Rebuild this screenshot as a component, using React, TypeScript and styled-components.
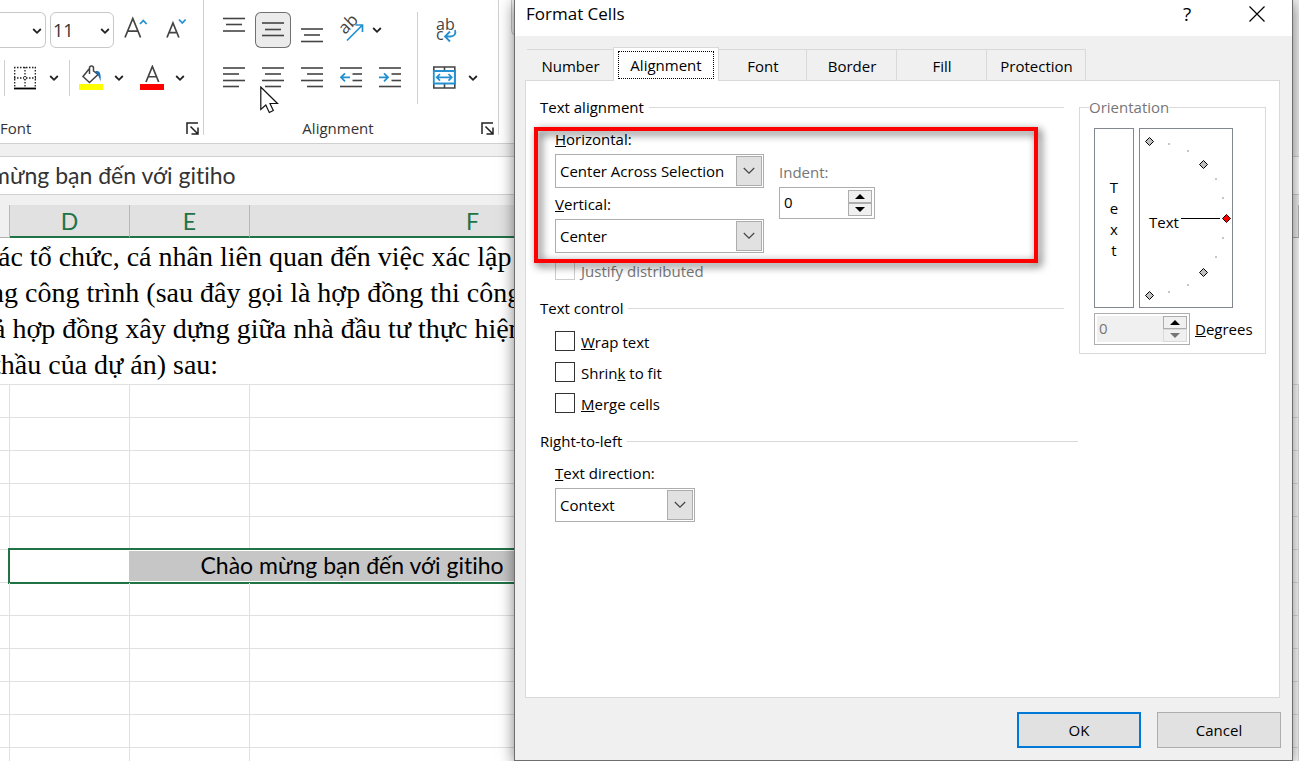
import React from "react";
import styled, { createGlobalStyle, css } from "styled-components";

const UI = `"Open Sans", "Noto Sans", sans-serif`;
const CELL = `Lato, "Noto Sans", sans-serif`;
const GREEN = "#217346";
const BLUE = "#2490d0";
const INK = "#444";

const GlobalStyle = createGlobalStyle`
  *, *::before, *::after { box-sizing: border-box; }
  body { margin: 0; font-family: ${UI}; font-size: 15px; line-height: 20px; color: #000; background: #fff; font-variant-ligatures: none; }
  button, input, select { font: inherit; color: inherit; margin: 0; padding: 0; }
  svg { display: block; flex-shrink: 0; }
`;

const Desktop = styled.div`
  position: relative;
  height: 100vh;
  overflow: hidden;
`;

/* ---------- Workbook ---------- */

const Workbook = styled.main`
  display: flex;
  flex-direction: column;
  background: #f0f0f0;
`;

const Ribbon = styled.header`
  display: flex;
  height: 144px;
  margin-right: 12px;
  background: #fff;
  border-bottom: 1px solid #d0d0d0;
`;

const Group = styled.section`
  display: flex;
  flex-direction: column;
  padding: 12px 4px 0 0;
  margin-bottom: 8px;
  border-right: 1px solid #d0d0d0;
`;

const GroupBody = styled.div`
  display: flex;
`;

const Tools = styled.div`
  display: flex;
  flex-direction: column;
  gap: 12px;
`;

const ToolRow = styled.div<{ $gap?: number; $indent?: number }>`
  display: flex;
  align-items: center;
  height: 36px;
  gap: ${(p) => p.$gap ?? 0}px;
  padding-left: ${(p) => p.$indent ?? 0}px;
`;

const GroupFooter = styled.footer<{ $center?: boolean }>`
  display: grid;
  grid-template-columns: 1fr 22px;
  align-items: center;
  justify-items: ${(p) => (p.$center ? "center" : "start")};
  height: 24px;
  margin-top: 22px;
  color: #333;
  svg {
    justify-self: end;
  }
`;

const IconButton = styled.button<{ $w?: number; $active?: boolean }>`
  flex: none;
  display: flex;
  align-items: center;
  justify-content: center;
  width: ${(p) => p.$w ?? 36}px;
  height: 36px;
  border: 0;
  border-radius: 6px;
  background: transparent;
  ${(p) =>
    p.$active &&
    css`
      background: #ebebeb;
      box-shadow: inset 0 0 0 1px #707070;
    `}
`;

const Separator = styled.span`
  flex: none;
  width: 1px;
  height: 36px;
  background: #d0d0d0;
`;

const TallSeparator = styled.span`
  flex: none;
  width: 1px;
  height: 92px;
  margin: 0 0 -8px 9px;
  background: #d0d0d0;
`;

const RibbonPicker = styled.span<{ $w: number; $cut?: boolean }>`
  position: relative;
  width: ${(p) => p.$w}px;
  height: 36px;
  margin-right: 4px;
  border: 1px solid #c8c8c8;
  border-radius: 6px;
  ${(p) =>
    p.$cut &&
    css`
      border-left: 0;
      border-radius: 0 6px 6px 0;
    `}
  select {
    width: 100%;
    height: 100%;
    padding-left: 2px;
    border: 0;
    background: transparent;
    appearance: none;
    font-size: 18px;
    color: #333;
  }
  svg {
    position: absolute;
    right: 2px;
    top: 12px;
    pointer-events: none;
  }
`;

const GalleryEdge = styled.div`
  width: 120px;
  height: 36px;
  margin-left: 12px;
  border: 1px solid #c8c8c8;
  border-top: 0;
  border-radius: 0 0 6px 6px;
  background: #f4f4f4;
`;

const FormulaBar = styled.div`
  height: 39px;
  margin-top: 12px;
  border: solid #d0d0d0;
  border-width: 1px 0;
  background: #fff;
  overflow: hidden;
  input {
    width: 100%;
    height: 36px;
    border: 0;
    background: none;
    text-indent: -9px;
    font-family: ${CELL};
    font-size: 23px;
    color: #333;
  }
`;

const Sheet = styled.table`
  width: 100%;
  margin-top: 10px;
  table-layout: fixed;
  border-spacing: 0;
  background: #fff;
  font-family: ${CELL};
  font-size: 23px;
`;

const ColumnHead = styled.th<{ $selected?: boolean }>`
  height: 33px;
  padding: 0;
  font-weight: 400;
  color: ${GREEN};
  background: ${(p) => (p.$selected ? "#e1e1e1" : "#f0f0f0")};
  border-right: 1px solid #b8b8b8;
  border-bottom: ${(p) => (p.$selected ? `2px solid ${GREEN}` : "1px solid #b0b0b0")};
`;

const Cell = styled.td`
  position: relative;
  height: 33px;
  padding: 0;
  border: solid #e0e0e0;
  border-width: 0 1px 1px 0;
`;

const WrappedCell = styled.td`
  height: 147px;
  padding: 1px 0;
  border-bottom: 1px solid #e0e0e0;
  overflow: hidden;
  white-space: nowrap;
  font-family: "Liberation Serif", serif;
  font-size: 28px;
  line-height: 36px;
`;

const Line = styled.div<{ $start: number }>`
  text-indent: ${(p) => p.$start}px;
`;

const SelectedRange = styled.div`
  position: absolute;
  inset: -2px -1px -2px -2px;
  padding: 1px;
  border: 2px solid ${GREEN};
  background: linear-gradient(to right, #fff 118px, #c6c6c6 118px) content-box, #fff;
  text-align: center;
  line-height: 28px;
`;

const Pointer = styled.svg`
  position: absolute;
  left: 260px;
  top: 86px;
`;

/* ---------- Dialog ---------- */

const Dialog = styled.div`
  position: absolute;
  inset: 0 6px 0 514px;
  display: flex;
  flex-direction: column;
  border: solid #6e6e6e;
  border-width: 0 1px 1px;
  background: #f0f0f0;
  box-shadow: 0 3px 14px rgba(0, 0, 0, 0.5);
`;

const TitleBar = styled.header`
  display: flex;
  align-items: center;
  height: 36px;
  padding: 0 27px 8px 11px;
  background: #fff;
  h1 {
    flex: 1;
    margin: 0;
    font-size: 17px;
    font-weight: 400;
  }
`;

const CaptionButton = styled.button`
  width: 16px;
  height: 20px;
  margin-left: 54px;
  border: 0;
  background: none;
  font-size: 19px;
`;

const TabList = styled.div`
  display: flex;
  align-items: flex-end;
  height: 44px;
  padding-left: 12px;
`;

const Tab = styled.button<{ $w: number }>`
  width: ${(p) => p.$w}px;
  height: 31px;
  padding: 1px 0 0 1px;
  border: solid #d9d9d9;
  border-width: 1px 1px 0 0;
  background: transparent;
  &[aria-selected="true"] {
    position: relative;
    height: 34px;
    margin: 0 0 -1px -1px;
    padding: 0 4px;
    border-left-width: 1px;
    background: #fff;
  }
`;

const FocusRing = styled.span`
  display: block;
  height: 28px;
  border: 1px dotted #000;
  line-height: 27px;
`;

const Pane = styled.div`
  flex: 1;
  display: grid;
  grid-template-columns: 1fr 187px;
  align-items: start;
  gap: 15px;
  margin: 0 12px 0 10px;
  padding: 16px 13px 0 14px;
  border: 1px solid #d9d9d9;
  background: #fff;
`;

const Settings = styled.div`
  display: flex;
  flex-direction: column;
  gap: 18px;
`;

const Section = styled.section<{ $wide?: boolean }>`
  position: relative;
  margin-right: ${(p) => (p.$wide ? -14 : 0)}px;
`;

const SectionTitle = styled.h2`
  display: flex;
  align-items: center;
  gap: 5px;
  margin: 0 0 12px;
  font-size: 15px;
  font-weight: 400;
  &::after {
    content: "";
    flex: 1;
    height: 1px;
    background: #d9d9d9;
  }
`;

const Fields = styled.div`
  display: flex;
  flex-direction: column;
  align-items: flex-start;
  padding-left: 15px;
`;

const FieldColumns = styled.div`
  display: flex;
  gap: 15px;
`;

const FieldStack = styled.div<{ $top?: number }>`
  display: flex;
  flex-direction: column;
  gap: 6px;
  padding-top: ${(p) => p.$top ?? 0}px;
`;

const Field = styled.div<{ $disabled?: boolean }>`
  display: flex;
  flex-direction: column;
  gap: 5px;
  > label {
    color: ${(p) => (p.$disabled ? "#767676" : "#000")};
  }
`;

const Combo = styled.span<{ $w: number }>`
  position: relative;
  width: ${(p) => p.$w}px;
  height: 34px;
  border: 1px solid #adadad;
  background: #fff;
  select {
    width: 100%;
    height: 100%;
    padding-left: 4px;
    border: 0;
    background: transparent;
    appearance: none;
  }
`;

const ComboArrow = styled.span`
  position: absolute;
  top: 1px;
  right: 1px;
  bottom: 1px;
  display: grid;
  place-items: center;
  width: 26px;
  border: 1px solid #adadad;
  background: #e1e1e1;
  pointer-events: none;
`;

const SpinBox = styled.span<{ $disabled?: boolean }>`
  display: flex;
  width: 96px;
  height: 32px;
  padding: 2px;
  border: 1px solid #adadad;
  background: #fff;
  input {
    flex: 1;
    min-width: 0;
    padding: 0 0 3px 2px;
    border: 0;
    background: ${(p) => (p.$disabled ? "#f0f0f0" : "#fff")};
    color: ${(p) => (p.$disabled ? "#767676" : "#000")};
  }
`;

const SpinButtons = styled.span`
  display: flex;
  flex-direction: column;
  width: 24px;
  button {
    flex: 1;
    display: grid;
    place-items: center;
    border: 1px solid #adadad;
    background: #f0f0f0;
  }
  button:disabled {
    border-color: #d9d9d9;
  }
`;

const CheckRow = styled.label<{ $disabled?: boolean }>`
  display: flex;
  align-items: center;
  gap: 6px;
  height: 21px;
  color: ${(p) => (p.$disabled ? "#767676" : "#000")};
  & + & {
    margin-top: 10px;
  }
  span {
    padding-top: 2px;
  }
  input {
    width: 20px;
    height: 20px;
    appearance: none;
    background: #fff;
    border: 1px solid ${(p) => (p.$disabled ? "#ccc" : "#333")};
  }
`;

const Spacer = styled.div`
  height: 6px;
`;

const Highlight = styled.div`
  position: absolute;
  top: 30px;
  left: -6px;
  right: 26px;
  height: 136px;
  border: 4px solid #f00;
  filter: drop-shadow(3px 3px 4px rgba(0, 0, 0, 0.7));
  pointer-events: none;
`;

const Orientation = styled.fieldset`
  margin: 0;
  padding: 11px 0 8px 14px;
  border: 1px solid #d9d9d9;
  min-width: 0;
  legend {
    margin-left: -5px;
    padding: 0;
    color: #767676;
  }
`;

const OrientationBoxes = styled.div`
  display: flex;
  gap: 5px;
`;

const StackedText = styled.button`
  width: 40px;
  height: 180px;
  padding: 2px 0 0;
  border: 1px solid #828790;
  background: #fff;
  line-height: 21px;
  span {
    display: block;
  }
`;

const Dial = styled.div`
  width: 94px;
  height: 180px;
  border: 1px solid #828790;
  font-size: 15px;
`;

const DegreesRow = styled.div`
  display: flex;
  align-items: center;
  gap: 5px;
  margin-top: 5px;
`;

const Actions = styled.footer`
  display: flex;
  justify-content: flex-end;
  gap: 16px;
  padding: 14px 11px 12px;
`;

const ActionButton = styled.button<{ $primary?: boolean }>`
  width: 124px;
  height: 36px;
  border: ${(p) => (p.$primary ? "2px solid #0078d7" : "1px solid #adadad")};
  background: #e1e1e1;
`;

/* ---------- Icons ---------- */

const Chevron = () => (
  <svg width="12" height="12" viewBox="0 0 12 12" fill="none" stroke="#222" strokeWidth="1.8">
    <path d="M2.2 4l3.8 3.8L9.8 4" />
  </svg>
);

const ComboChevron = () => (
  <svg width="12" height="8" viewBox="0 0 12 8" fill="none" stroke="#444" strokeWidth="1.2">
    <path d="M.8 1l5.2 5.2L11.200 1" />
  </svg>
);

const Triangle = ({ down, color = "#000" }: { down?: boolean; color?: string }) => (
  <svg width="10" height="5" viewBox="0 0 10 5" fill={color}>
    <path d={down ? "M0 0h10L5 5z" : "M0 5h10L5 0z"} />
  </svg>
);

type Stroke = [number, number, number];

const Lines = ({ strokes, children }: { strokes: Stroke[]; children?: React.ReactNode }) => (
  <svg width="36" height="36" viewBox="0 0 36 36" fill="none">
    {strokes.map(([x1, x2, y]) => (
      <path key={y} d={`M${x1} ${y}H${x2}`} stroke={INK} strokeWidth="1.6" />
    ))}
    {children}
  </svg>
);

const Launcher = () => (
  <svg width="13" height="13" viewBox="0 0 13 13" fill="none" stroke="#222" strokeWidth="1.5">
    <path d="M1 12V1h11M4.500 4.500l7 7M12 5.500V12H5.500" />
  </svg>
);

const LetterA = ({ size }: { size: number }) => {
  const h = size;
  const w = size * 0.82;
  return (
    <path
      d={`M0 ${h}L${w / 2} 0L${w} ${h}M${w * 0.17} ${h * 0.66}H${w * 0.83}`}
      stroke={INK}
      strokeWidth="1.7"
      fill="none"
    />
  );
};

const GrowFont = () => (
  <svg width="24" height="36" viewBox="0 0 24 36" fill="none">
    <g transform="translate(1 6.500)">
      <LetterA size={19} />
    </g>
    <path d="M16 12l3.300-3.500L22.600 12" stroke={BLUE} strokeWidth="1.8" />
  </svg>
);

const ShrinkFont = () => (
  <svg width="24" height="36" viewBox="0 0 24 36" fill="none">
    <g transform="translate(3 11)">
      <LetterA size={14.5} />
    </g>
    <path d="M15 7.500l3.300 3.500L21.600 7.500" stroke={BLUE} strokeWidth="1.8" />
  </svg>
);

const BordersIcon = () => (
  <svg width="24" height="24" viewBox="0 0 24 24" fill="none">
    <path
      d="M1 1.500H23M1 12H23M1.700 1V21M12 1V21M22.300 1V21"
      stroke="#222"
      strokeWidth="1.300"
      strokeDasharray="1.500 1.500"
    />
    <path d="M1 22.500H23" stroke="#000" strokeWidth="1.800" />
    <circle cx="12" cy="12" r="1.600" stroke="#222" strokeWidth=".8" fill="#fff" />
  </svg>
);

const FillIcon = () => (
  <svg width="24" height="26" viewBox="0 0 24 26" fill="none">
    <path
      d="M10.500 3.500L4 11.500l6.500 6L19 9.500 14.500 6V3a2 2 0 0 0-4 0v6"
      stroke={INK}
      strokeWidth="1.500"
    />
    <path d="M16 6.500c4-1.500 6.500 1 5.500 10-1-3-2-7-5.500-10z" fill="#1a6fb8" />
    <path d="M0 19h24v6H0z" fill="#ff0" />
  </svg>
);

const FontColorIcon = () => (
  <svg width="24" height="26" viewBox="0 0 24 26" fill="none">
    <g transform="translate(6 1.500)">
      <LetterA size={15.5} />
    </g>
    <path d="M0 19h24v6H0z" fill="#f00" />
  </svg>
);

const RotateIcon = () => (
  <svg width="36" height="36" viewBox="0 0 36 36" fill="none">
    <text x="12" y="23" transform="rotate(-45 12 23)" fontFamily={UI} fontSize="17" fill={INK}>
      ab
    </text>
    <path d="M14 28.500L29 13.500M22.500 13H29.500V20" stroke={BLUE} strokeWidth="1.700" />
  </svg>
);

const WrapIcon = () => (
  <svg width="36" height="36" viewBox="0 0 36 36" fill="none">
    <text fontFamily={UI} fontSize="16" fill={INK}>
      <tspan x="9" y="18">
        ab
      </tspan>
      <tspan x="9" y="28">
        c
      </tspan>
    </text>
    <path d="M28 18c1.500 4-1 6.500-4.500 6.500h-5M23 19.500l-5 5 5 5" stroke={BLUE} strokeWidth="1.800" />
  </svg>
);

const MergeIcon = () => (
  <svg width="36" height="36" viewBox="0 0 36 36" fill="none">
    <path d="M6.800 7h21v21h-21zM17.500 7v4M17.500 24v4" stroke={INK} strokeWidth="1.600" />
    <path d="M6.800 11h21v12.500h-21z" stroke={BLUE} strokeWidth="1.800" fill="#fff" />
    <path d="M10 17.300h14.500M13 14l-3.300 3.300L13 20.600M21.500 14l3.300 3.300-3.300 3.300" stroke={BLUE} strokeWidth="1.700" />
  </svg>
);

/* ---------- Data ---------- */

const paragraph = [
  { text: "ác tổ chức, cá nhân liên quan đến việc xác lập và", start: -2 },
  { text: "ng công trình (sau đây gọi là hợp đồng thi công", start: -10 },
  { text: "ả hợp đồng xây dựng giữa nhà đầu tư thực hiện", start: -7 },
  { text: "thầu của dự án) sau:", start: -7 },
];

const tabs = [
  { label: "Number", w: 87 },
  { label: "Alignment", w: 106 },
  { label: "Font", w: 88 },
  { label: "Border", w: 90 },
  { label: "Fill", w: 90 },
  { label: "Protection", w: 99 },
];

const vertical: { label: string; strokes: Stroke[] }[] = [
  { label: "Top Align", strokes: [[7, 29, 6.5], [10, 26, 12.5], [7, 29, 19]] },
  { label: "Middle Align", strokes: [[7, 29, 11], [10, 26, 17.5], [7, 29, 23.5]] },
  { label: "Bottom Align", strokes: [[7, 29, 17], [10, 26, 23], [7, 29, 29.5]] },
];

const horizontal: { label: string; strokes: Stroke[]; arrow?: string }[] = [
  { label: "Align Left", strokes: [[7, 29, 8], [7, 23, 14], [7, 29, 20.5], [7, 23, 26.5]] },
  { label: "Center", strokes: [[7, 29, 8], [10, 26, 14], [7, 29, 20.5], [10, 26, 26.5]] },
  { label: "Align Right", strokes: [[7, 29, 8], [13, 29, 14], [7, 29, 20.5], [13, 29, 26.5]] },
  {
    label: "Decrease Indent",
    strokes: [[7, 29, 8], [19.5, 29, 14], [19.5, 29, 20.5], [7, 29, 26.5]],
    arrow: "M17 17.300H8M12 13.300l-4 4 4 4",
  },
  {
    label: "Increase Indent",
    strokes: [[7, 29, 8], [19.5, 29, 14], [19.5, 29, 20.5], [7, 29, 26.5]],
    arrow: "M7 17.300h9M12 13.300l4 4-4 4",
  },
];

const handles = [
  { x: 9.5, y: 12.5 },
  { x: 63.5, y: 35.5 },
  { x: 86.5, y: 89.5, active: true },
  { x: 63.5, y: 143.5 },
  { x: 9.5, y: 166.5 },
];

const ticks = [[28, 14], [47, 21], [75, 49], [82, 68], [82, 108], [75, 127], [47, 155], [28, 162]];

const emptyRows = (from: number, count: number) =>
  Array.from({ length: count }, (_, i) => (
    <tr key={from + i}>
      <Cell />
      <Cell />
      <Cell />
      <Cell />
      <Cell />
    </tr>
  ));

/* ---------- Parts ---------- */

const Dropdown = ({ id, value, w }: { id: string; value: string; w: number }) => (
  <Combo $w={w}>
    <select id={id} defaultValue={value}>
      <option>{value}</option>
    </select>
    <ComboArrow>
      <ComboChevron />
    </ComboArrow>
  </Combo>
);

const Spinner = ({ id, disabled }: { id: string; disabled?: boolean }) => (
  <SpinBox $disabled={disabled}>
    <input id={id} type="text" defaultValue="0" disabled={disabled} />
    <SpinButtons>
      <button type="button" aria-label="Increase">
        <Triangle />
      </button>
      <button type="button" aria-label="Decrease" disabled={disabled}>
        <Triangle down color={disabled ? "#767676" : "#000"} />
      </button>
    </SpinButtons>
  </SpinBox>
);

const RibbonArea = () => (
  <Ribbon>
    <Group>
      <GroupBody>
        <Tools>
          <ToolRow>
            <RibbonPicker $w={46} $cut>
              <select aria-label="Font name" />
              <Chevron />
            </RibbonPicker>
            <RibbonPicker $w={64}>
              <select aria-label="Font size" defaultValue="11">
                <option>11</option>
              </select>
              <Chevron />
            </RibbonPicker>
            <IconButton aria-label="Increase font size">
              <GrowFont />
            </IconButton>
            <IconButton $w={44} aria-label="Decrease font size">
              <ShrinkFont />
            </IconButton>
          </ToolRow>
          <ToolRow $indent={4}>
            <Separator />
            <IconButton $w={40} aria-label="Borders">
              <BordersIcon />
            </IconButton>
            <IconButton $w={18} aria-label="Border options">
              <Chevron />
            </IconButton>
            <ToolRow $indent={6}>
              <Separator />
            </ToolRow>
            <IconButton $w={42} aria-label="Fill color">
              <FillIcon />
            </IconButton>
            <IconButton $w={14} aria-label="Fill color options">
              <Chevron />
            </IconButton>
            <ToolRow $indent={8}>
              <IconButton aria-label="Font color">
                <FontColorIcon />
              </IconButton>
              <IconButton $w={20} aria-label="Font color options">
                <Chevron />
              </IconButton>
            </ToolRow>
            <ToolRow $indent={9} />
          </ToolRow>
        </Tools>
      </GroupBody>
      <GroupFooter>
        <span>Font</span>
        <Launcher />
      </GroupFooter>
    </Group>
    <Group>
      <GroupBody>
        <Tools>
          <ToolRow $gap={3} $indent={12}>
            {vertical.map((v, i) => (
              <IconButton key={v.label} aria-label={v.label} $active={i === 1}>
                <Lines strokes={v.strokes} />
              </IconButton>
            ))}
            <IconButton aria-label="Orientation">
              <RotateIcon />
            </IconButton>
            <IconButton $w={10} aria-label="Orientation options">
              <Chevron />
            </IconButton>
          </ToolRow>
          <ToolRow $gap={3} $indent={12}>
            {horizontal.map((h) => (
              <IconButton key={h.label} aria-label={h.label}>
                <Lines strokes={h.strokes}>
                  {h.arrow && <path d={h.arrow} stroke={BLUE} strokeWidth="1.800" />}
                </Lines>
              </IconButton>
            ))}
          </ToolRow>
        </Tools>
        <TallSeparator />
        <Tools>
          <ToolRow $indent={9}>
            <IconButton aria-label="Wrap text">
              <WrapIcon />
            </IconButton>
          </ToolRow>
          <ToolRow $indent={9}>
            <IconButton aria-label="Merge and center">
              <MergeIcon />
            </IconButton>
            <IconButton $w={20} aria-label="Merge options">
              <Chevron />
            </IconButton>
            <ToolRow $indent={11} />
          </ToolRow>
        </Tools>
      </GroupBody>
      <GroupFooter $center>
        <span>Alignment</span>
        <Launcher />
      </GroupFooter>
    </Group>
    <GalleryEdge />
  </Ribbon>
);

const SheetArea = () => (
  <Sheet>
    <colgroup>
      <col width="10" />
      <col width="120" />
      <col width="120" />
      <col width="446" />
      <col />
    </colgroup>
    <thead>
      <tr>
        <ColumnHead />
        <ColumnHead $selected>D</ColumnHead>
        <ColumnHead $selected>E</ColumnHead>
        <ColumnHead $selected>F</ColumnHead>
        <ColumnHead />
      </tr>
    </thead>
    <tbody>
      <tr>
        <WrappedCell colSpan={5}>
          {paragraph.map((l) => (
            <Line key={l.text} $start={l.start}>
              {l.text}
            </Line>
          ))}
        </WrappedCell>
      </tr>
      {emptyRows(0, 5)}
      <tr>
        <Cell />
        <Cell colSpan={3}>
          <SelectedRange>Chào mừng bạn đến với gitiho</SelectedRange>
        </Cell>
        <Cell />
      </tr>
      {emptyRows(6, 6)}
    </tbody>
  </Sheet>
);

const FormatCells = () => (
  <Dialog role="dialog" aria-labelledby="dialog-title">
    <TitleBar>
      <h1 id="dialog-title">Format Cells</h1>
      <CaptionButton>?</CaptionButton>
      <CaptionButton aria-label="Close">
        <svg width="16" height="16" viewBox="0 0 16 16" stroke="#000" strokeWidth="1.200">
          <path d="M.5 .5l15 15M15.500 .5l-15 15" />
        </svg>
      </CaptionButton>
    </TitleBar>
    <TabList role="tablist">
      {tabs.map((t) => {
        const selected = t.label === "Alignment";
        return (
          <Tab key={t.label} role="tab" aria-selected={selected} $w={t.w}>
            {selected ? <FocusRing>{t.label}</FocusRing> : t.label}
          </Tab>
        );
      })}
    </TabList>
    <Pane role="tabpanel">
      <Settings>
        <Section>
          <SectionTitle>Text alignment</SectionTitle>
          <Fields>
            <FieldColumns>
              <FieldStack>
                <Field>
                  <label htmlFor="horizontal">
                    <u>H</u>orizontal:
                  </label>
                  <Dropdown id="horizontal" value="Center Across Selection" w={209} />
                </Field>
                <Field>
                  <label htmlFor="vertical">
                    <u>V</u>ertical:
                  </label>
                  <Dropdown id="vertical" value="Center" w={209} />
                </Field>
              </FieldStack>
              <FieldStack $top={33}>
                <Field $disabled>
                  <label htmlFor="indent">Indent:</label>
                  <Spinner id="indent" />
                </Field>
              </FieldStack>
            </FieldColumns>
            <Spacer />
            <CheckRow $disabled>
              <input type="checkbox" disabled />
              <span>Justify distributed</span>
            </CheckRow>
          </Fields>
          <Highlight />
        </Section>
        <Section>
          <SectionTitle>Text control</SectionTitle>
          <Fields>
            <CheckRow>
              <input type="checkbox" />
              <span>
                <u>W</u>rap text
              </span>
            </CheckRow>
            <CheckRow>
              <input type="checkbox" />
              <span>
                Shrin<u>k</u> to fit
              </span>
            </CheckRow>
            <CheckRow>
              <input type="checkbox" />
              <span>
                <u>M</u>erge cells
              </span>
            </CheckRow>
          </Fields>
        </Section>
        <Section $wide>
          <SectionTitle>Right-to-left</SectionTitle>
          <Fields>
            <Field>
              <label htmlFor="direction">
                <u>T</u>ext direction:
              </label>
              <Dropdown id="direction" value="Context" w={140} />
            </Field>
          </Fields>
        </Section>
      </Settings>
      <Orientation>
        <legend>Orientation</legend>
        <OrientationBoxes>
          <StackedText aria-label="Vertical text">
            <span>T</span>
            <span>e</span>
            <span>x</span>
            <span>t</span>
          </StackedText>
          <Dial>
            <svg width="92" height="178" viewBox="0 0 92 178">
              {ticks.map(([x, y]) => (
                <rect key={`${x}-${y}`} x={x} y={y} width="2" height="2" fill="#c6c6c6" />
              ))}
              {handles.map((h) => (
                <path
                  key={`${h.x}-${h.y}`}
                  d={`M${h.x} ${h.y - 4}l4 4-4 4-4-4z`}
                  fill={h.active ? "#f00" : "#c0c0c0"}
                  stroke="#000"
                />
              ))}
              <path d="M41 89.500H80" stroke="#000" />
              <text x="9" y="99" fontFamily={UI}>
                Text
              </text>
            </svg>
          </Dial>
        </OrientationBoxes>
        <DegreesRow>
          <Spinner id="degrees" disabled />
          <label htmlFor="degrees">
            <u>D</u>egrees
          </label>
        </DegreesRow>
      </Orientation>
    </Pane>
    <Actions>
      <ActionButton $primary>OK</ActionButton>
      <ActionButton>Cancel</ActionButton>
    </Actions>
  </Dialog>
);

export default function App() {
  return (
    <Desktop>
      <GlobalStyle />
      <Workbook>
        <RibbonArea />
        <FormulaBar>
          <input aria-label="Formula" defaultValue="mừng bạn đến với gitiho" />
        </FormulaBar>
        <SheetArea />
      </Workbook>
      <Pointer width="20" height="28" viewBox="0 0 20 28" fill="#fff" stroke="#111" strokeWidth="1.200">
        <path d="M.8 1v22.500l5-4.500 3.500 7.500 4-2-3.300-7H17.500z" />
      </Pointer>
      <FormatCells />
    </Desktop>
  );
}
